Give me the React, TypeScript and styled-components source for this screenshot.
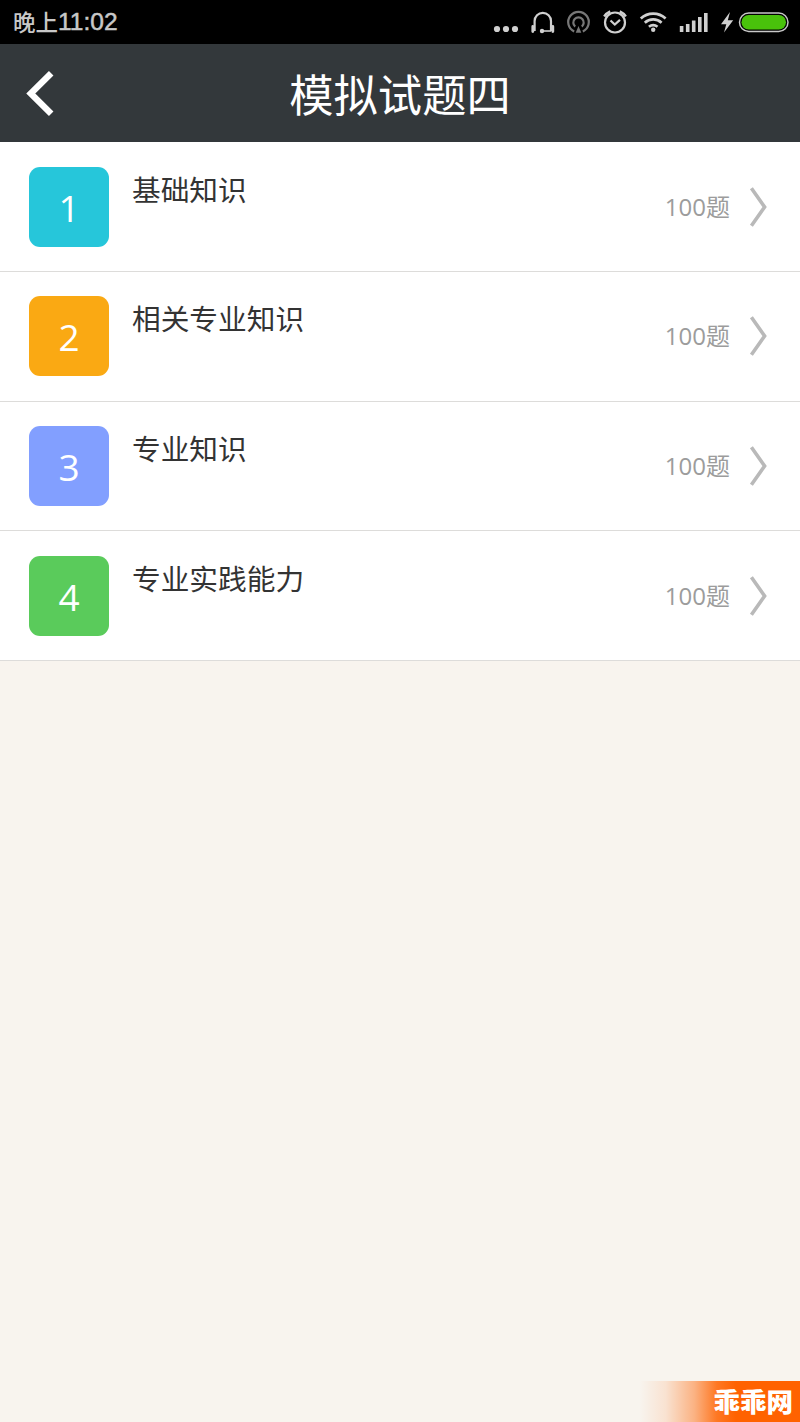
import React from 'react';
import styled, { createGlobalStyle } from 'styled-components';

const GlobalStyle = createGlobalStyle`
  * { box-sizing: border-box; }
  body { margin: 0; background: #f8f4ee; font-family: "Open Sans", "Noto Sans CJK SC", sans-serif; }
`;

const Screen = styled.div`
  display: flex;
  flex-direction: column;
  width: 800px;
  height: 1422px;
  overflow: hidden;
  background: #f8f4ee;
`;

const StatusBar = styled.div`
  display: flex;
  justify-content: space-between;
  height: 44px;
  padding-left: 13px;
  background: #000;
`;

const Clock = styled.div`
  display: flex;
  font: 500 22.5px/42px "Noto Sans CJK SC", sans-serif;
  color: #c8c8c8;
`;

const ClockDigits = styled.span`
  font: 400 24.5px/44px "Liberation Sans", sans-serif;
  -webkit-text-stroke: 0.5px #c8c8c8;
`;

const StatusIcons = styled.svg`
  display: block;
  width: 315px;
  height: 44px;
`;

const Header = styled.header`
  display: grid;
  grid-template-columns: 80px 1fr 80px;
  height: 98.4px;
  background: #33383b;
`;

const BackIcon = styled.svg`
  display: block;
  width: 80px;
  height: 98px;
`;

const Title = styled.h1`
  margin: 0;
  font: 400 44.3px/98px "Noto Sans CJK SC", sans-serif;
  text-align: center;
  white-space: nowrap;
  color: #fff;
`;

const List = styled.div`
  display: flex;
  flex-direction: column;
`;

const Row = styled.div`
  display: flex;
  height: 129.6px;
  padding: 24.4px 31px 0 29px;
  background: #fff;
  border-bottom: 1px solid #dddcda;
`;

const Badge = styled.div<{ $color: string }>`
  width: 80px;
  height: 80px;
  border-radius: 11px;
  background: ${(p) => p.$color};
  color: #fff;
  font: 400 37px/81px "Open Sans", sans-serif;
  text-align: center;
`;

const Name = styled.div`
  flex: 1;
  margin-left: 23px;
  font: 400 28.7px/44px "Noto Sans CJK SC", sans-serif;
  color: #333;
`;

const Count = styled.div`
  font: 400 24px/80px "Open Sans", "Noto Sans CJK SC", sans-serif;
  color: #9c9c9c;
`;

const Chevron = styled.svg`
  display: block;
  width: 20px;
  height: 80px;
  margin-left: 19px;
`;

const Watermark = styled.div`
  display: flex;
  justify-content: flex-end;
  align-self: flex-end;
  width: 160px;
  height: 41px;
  margin-top: auto;
  padding-right: 7px;
  background: linear-gradient(90deg, rgba(255, 98, 0, 0) 0%, rgba(255, 98, 0, 0.12) 16%, rgba(255, 98, 0, 0.45) 34%, rgba(255, 98, 0, 0.85) 48%, #ff6200 60%);
  color: #fff;
  font: 900 26.5px/40px "Noto Sans CJK SC", sans-serif;
`;

const sections = [
  { name: '基础知识', color: '#26c6da' },
  { name: '相关专业知识', color: '#faa913' },
  { name: '专业知识', color: '#829fff' },
  { name: '专业实践能力', color: '#5acb5b' },
];

export default function App() {
  return (
    <Screen>
      <GlobalStyle />
      <StatusBar>
        <Clock>晚上<ClockDigits>11:02</ClockDigits></Clock>
        <StatusIcons viewBox="485 0 315 44" fill="none" stroke="#d0d0d0" strokeWidth="2.2">
          <g fill="#d0d0d0" stroke="none">
            <circle cx="497" cy="29" r="3.1" />
            <circle cx="506" cy="29" r="3.1" />
            <circle cx="515" cy="29" r="3.1" />
          </g>
          <path d="M534.6 31V21a8 8 0 0 1 16.4 0V31" />
          <path d="M551 31h-8" strokeWidth="1.6" />
          <path d="M532.8 26.5v5M552.8 26.5v5" strokeWidth="2.8" strokeLinecap="round" />
          <circle cx="542" cy="31" r="2.2" fill="#d0d0d0" stroke="none" />
          <g stroke="#777">
            <path d="M574.2 31.5a10.3 10.3 0 1 1 8.6 0" />
            <path d="M575.2 26.6a5.2 5.2 0 1 1 6.6 0" />
            <path d="M578.5 26l2.8 6.8h-5.6z" fill="#777" stroke="none" />
          </g>
          <circle cx="615" cy="22.5" r="10" />
          <path d="M610.5 20.5l4.3 4 5.2-4.6" />
          <path d="M604.2 16.5a13.5 13.5 0 0 1 6-5.2M625.8 16.5a13.5 13.5 0 0 0-6-5.2" strokeWidth="2.5" />
          <path d="M640.8 18.6a18 18 0 0 1 24.8 0M644.8 22.7a12.5 12.5 0 0 1 16.8 0M648.9 26.7a7 7 0 0 1 8.6 0" strokeWidth="2.7" />
          <circle cx="653.2" cy="29.8" r="2.2" fill="#d0d0d0" stroke="none" />
          <path d="M681.6 32v-6M687.7 32v-8M693.7 32v-11.5M699.8 32v-15M705.8 32v-19" strokeWidth="3.6" />
          <path d="M730 12l-9 12.2h5.3L724 32.4l9.2-12.2h-5.4z" fill="#d0d0d0" stroke="none" />
          <rect x="739.5" y="13" width="48.5" height="18.5" rx="9.25" strokeWidth="1.5" stroke="#c8c8c8" />
          <rect x="741.5" y="15" width="44.5" height="14.5" rx="7.25" fill="#49c20b" stroke="none" />
        </StatusIcons>
      </StatusBar>
      <Header>
        <BackIcon viewBox="0 44 80 98" fill="none" stroke="#fff" strokeWidth="6.4">
          <path d="M51.2 73.2L30.8 93.5l20.4 20.2" />
        </BackIcon>
        <Title>模拟试题四</Title>
      </Header>
      <List>
        {sections.map((s, i) => (
          <Row key={s.name}>
            <Badge $color={s.color}>{i + 1}</Badge>
            <Name>{s.name}</Name>
            <Count>100题</Count>
            <Chevron viewBox="0 0 20 80" fill="none" stroke="#b9b9b9" strokeWidth="3.6">
              <path d="M2.4 21.2L15.6 40 2.4 58.8" />
            </Chevron>
          </Row>
        ))}
      </List>
      <Watermark>乖乖网</Watermark>
    </Screen>
  );
}
